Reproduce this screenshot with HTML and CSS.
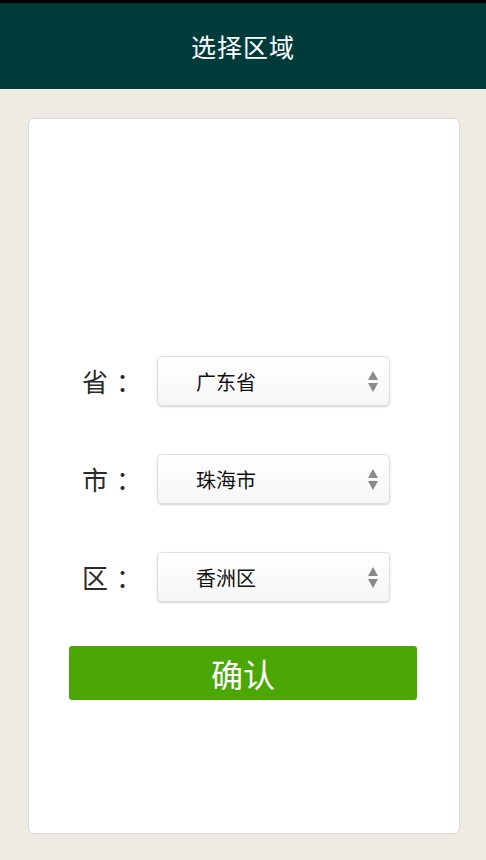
FILE: index.html
```html
<!DOCTYPE html>
<html lang="zh">
<head>
<meta charset="utf-8">
<title>选择区域</title>
<link rel="stylesheet" href="styles.css">
</head>
<body>
<header class="topbar"><h1 class="title">选择区域</h1></header>
<main class="page">
  <section class="card">
    <div class="row">
      <span class="label">省<span class="colon">：</span></span>
      <div class="select"><span class="value">广东省</span><span class="arrows"><i class="up"></i><i class="down"></i></span></div>
    </div>
    <div class="row">
      <span class="label">市<span class="colon">：</span></span>
      <div class="select"><span class="value">珠海市</span><span class="arrows"><i class="up"></i><i class="down"></i></span></div>
    </div>
    <div class="row">
      <span class="label">区<span class="colon">：</span></span>
      <div class="select"><span class="value">香洲区</span><span class="arrows"><i class="up"></i><i class="down"></i></span></div>
    </div>
    <button class="confirm">确认</button>
  </section>
</main>
</body>
</html>
```
FILE: styles.css
```css
html, body { margin: 0; padding: 0; }
body {
  background: #eeeae4;
  font-family: "Noto Sans CJK SC", "Noto Sans", sans-serif;
  width: 486px;
  height: 860px;
  overflow: hidden;
}
.topbar {
  border-top: 3px solid #000;
  height: 86px;
  background: #003b3b;
  display: flex;
  align-items: center;
  justify-content: center;
}
.title {
  margin: 0;
  color: #fff;
  font-size: 25px;
  font-weight: 400;
  letter-spacing: 1px;
}
.page { padding: 29px 26px 0 28px; }
.card {
  box-sizing: border-box;
  height: 716px;
  background: #fff;
  border: 1px solid #dcd8d2;
  border-radius: 6px;
  padding: 237px 0 0 0;
  display: flex;
  flex-direction: column;
}
.row {
  display: flex;
  align-items: center;
  height: 50px;
  margin-bottom: 48px;
  padding-left: 53px;
}
.row:nth-child(3) { margin-bottom: 44px; }
.label {
  width: 75px;
  font-size: 26px;
  color: #2a2a2a;
  line-height: 1;
  white-space: nowrap;
}
.colon {
  margin-left: 8px;
}
.select {
  box-sizing: border-box;
  width: 233px;
  height: 50px;
  border: 1px solid #dedede;
  border-radius: 5px;
  background: linear-gradient(#ffffff, #f6f6f6);
  box-shadow: 0 1px 2px rgba(0,0,0,0.18);
  display: flex;
  align-items: center;
  justify-content: space-between;
  padding: 0 11px 0 38px;
}
.value { font-size: 20px; color: #111; }
.arrows { display: flex; flex-direction: column; gap: 3px; }
.arrows i {
  display: block;
  width: 0; height: 0;
  border-left: 5px solid transparent;
  border-right: 5px solid transparent;
}
.arrows .up { border-bottom: 9px solid #8a8a8a; }
.arrows .down { border-top: 9px solid #8a8a8a; }
.confirm {
  margin: 0 42px 0 40px;
  height: 54px;
  border: none;
  border-radius: 3px;
  background: #4aa706;
  color: #fff;
  font-family: "Noto Sans CJK SC", "Noto Sans", sans-serif;
  font-size: 32px;
  padding: 0;
}
```
